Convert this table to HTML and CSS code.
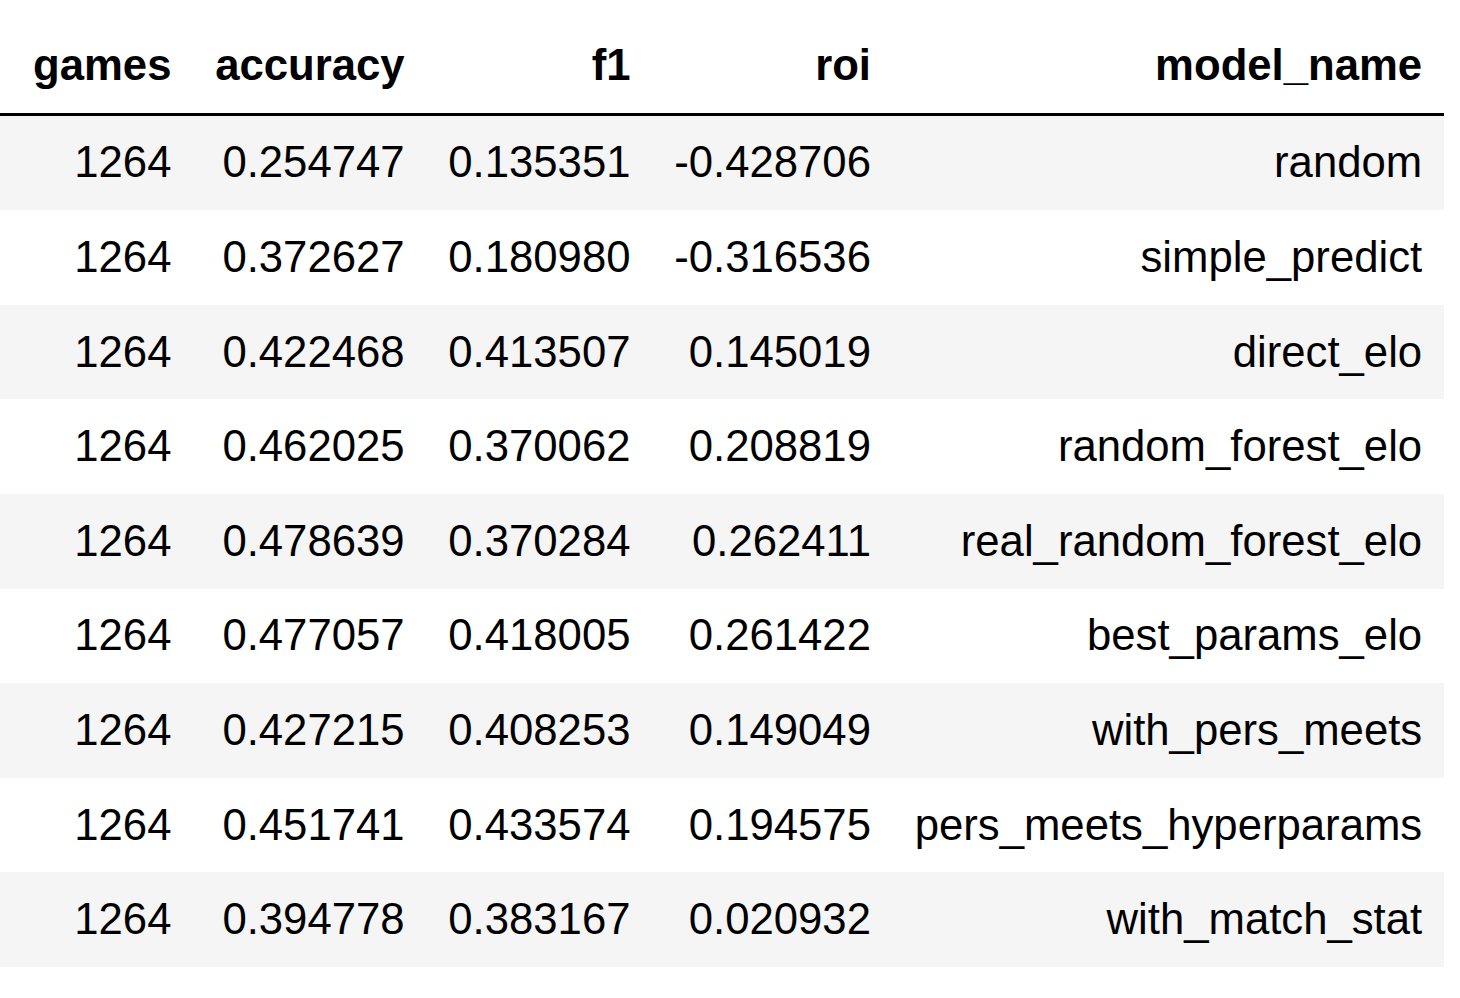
FILE: index.html
```html
<!DOCTYPE html>
<html>
<head>
<meta charset="utf-8">
<link rel="stylesheet" href="styles.css">
</head>
<body>
<table class="dataframe">
  <thead>
    <tr>
      <th class="first">games</th>
      <th>accuracy</th>
      <th>f1</th>
      <th>roi</th>
      <th>model_name</th>
    </tr>
  </thead>
  <tbody>
    <tr><td class="first">1264</td><td>0.254747</td><td>0.135351</td><td>-0.428706</td><td>random</td></tr>
    <tr><td class="first">1264</td><td>0.372627</td><td>0.180980</td><td>-0.316536</td><td>simple_predict</td></tr>
    <tr><td class="first">1264</td><td>0.422468</td><td>0.413507</td><td>0.145019</td><td>direct_elo</td></tr>
    <tr><td class="first">1264</td><td>0.462025</td><td>0.370062</td><td>0.208819</td><td>random_forest_elo</td></tr>
    <tr><td class="first">1264</td><td>0.478639</td><td>0.370284</td><td>0.262411</td><td>real_random_forest_elo</td></tr>
    <tr><td class="first">1264</td><td>0.477057</td><td>0.418005</td><td>0.261422</td><td>best_params_elo</td></tr>
    <tr><td class="first">1264</td><td>0.427215</td><td>0.408253</td><td>0.149049</td><td>with_pers_meets</td></tr>
    <tr><td class="first">1264</td><td>0.451741</td><td>0.433574</td><td>0.194575</td><td>pers_meets_hyperparams</td></tr>
    <tr><td class="first">1264</td><td>0.394778</td><td>0.383167</td><td>0.020932</td><td>with_match_stat</td></tr>
  </tbody>
</table>
</body>
</html>
```

FILE: styles.css
```css
html, body {
  margin: 0;
  padding: 0;
  background: #ffffff;
}

body {
  padding-top: 18px;
  font-family: "Liberation Sans", Arial, Helvetica, sans-serif;
  color: #000000;
}

.dataframe {
  border-collapse: collapse;
  border-spacing: 0;
  font-size: 43.7px;
  border: none;
}

.dataframe th,
.dataframe td {
  text-align: right;
  vertical-align: middle;
  padding: 21.85px;
  line-height: 50.9px;
  white-space: nowrap;
  border: none;
}

.dataframe th.first,
.dataframe td.first {
  padding-left: 33px;
}

.dataframe thead {
  border-bottom: 3.6px solid #000000;
  vertical-align: bottom;
}

.dataframe thead th {
  font-weight: bold;
  vertical-align: bottom;
}

.dataframe tbody tr:nth-child(odd) {
  background: #f5f5f5;
}
```
